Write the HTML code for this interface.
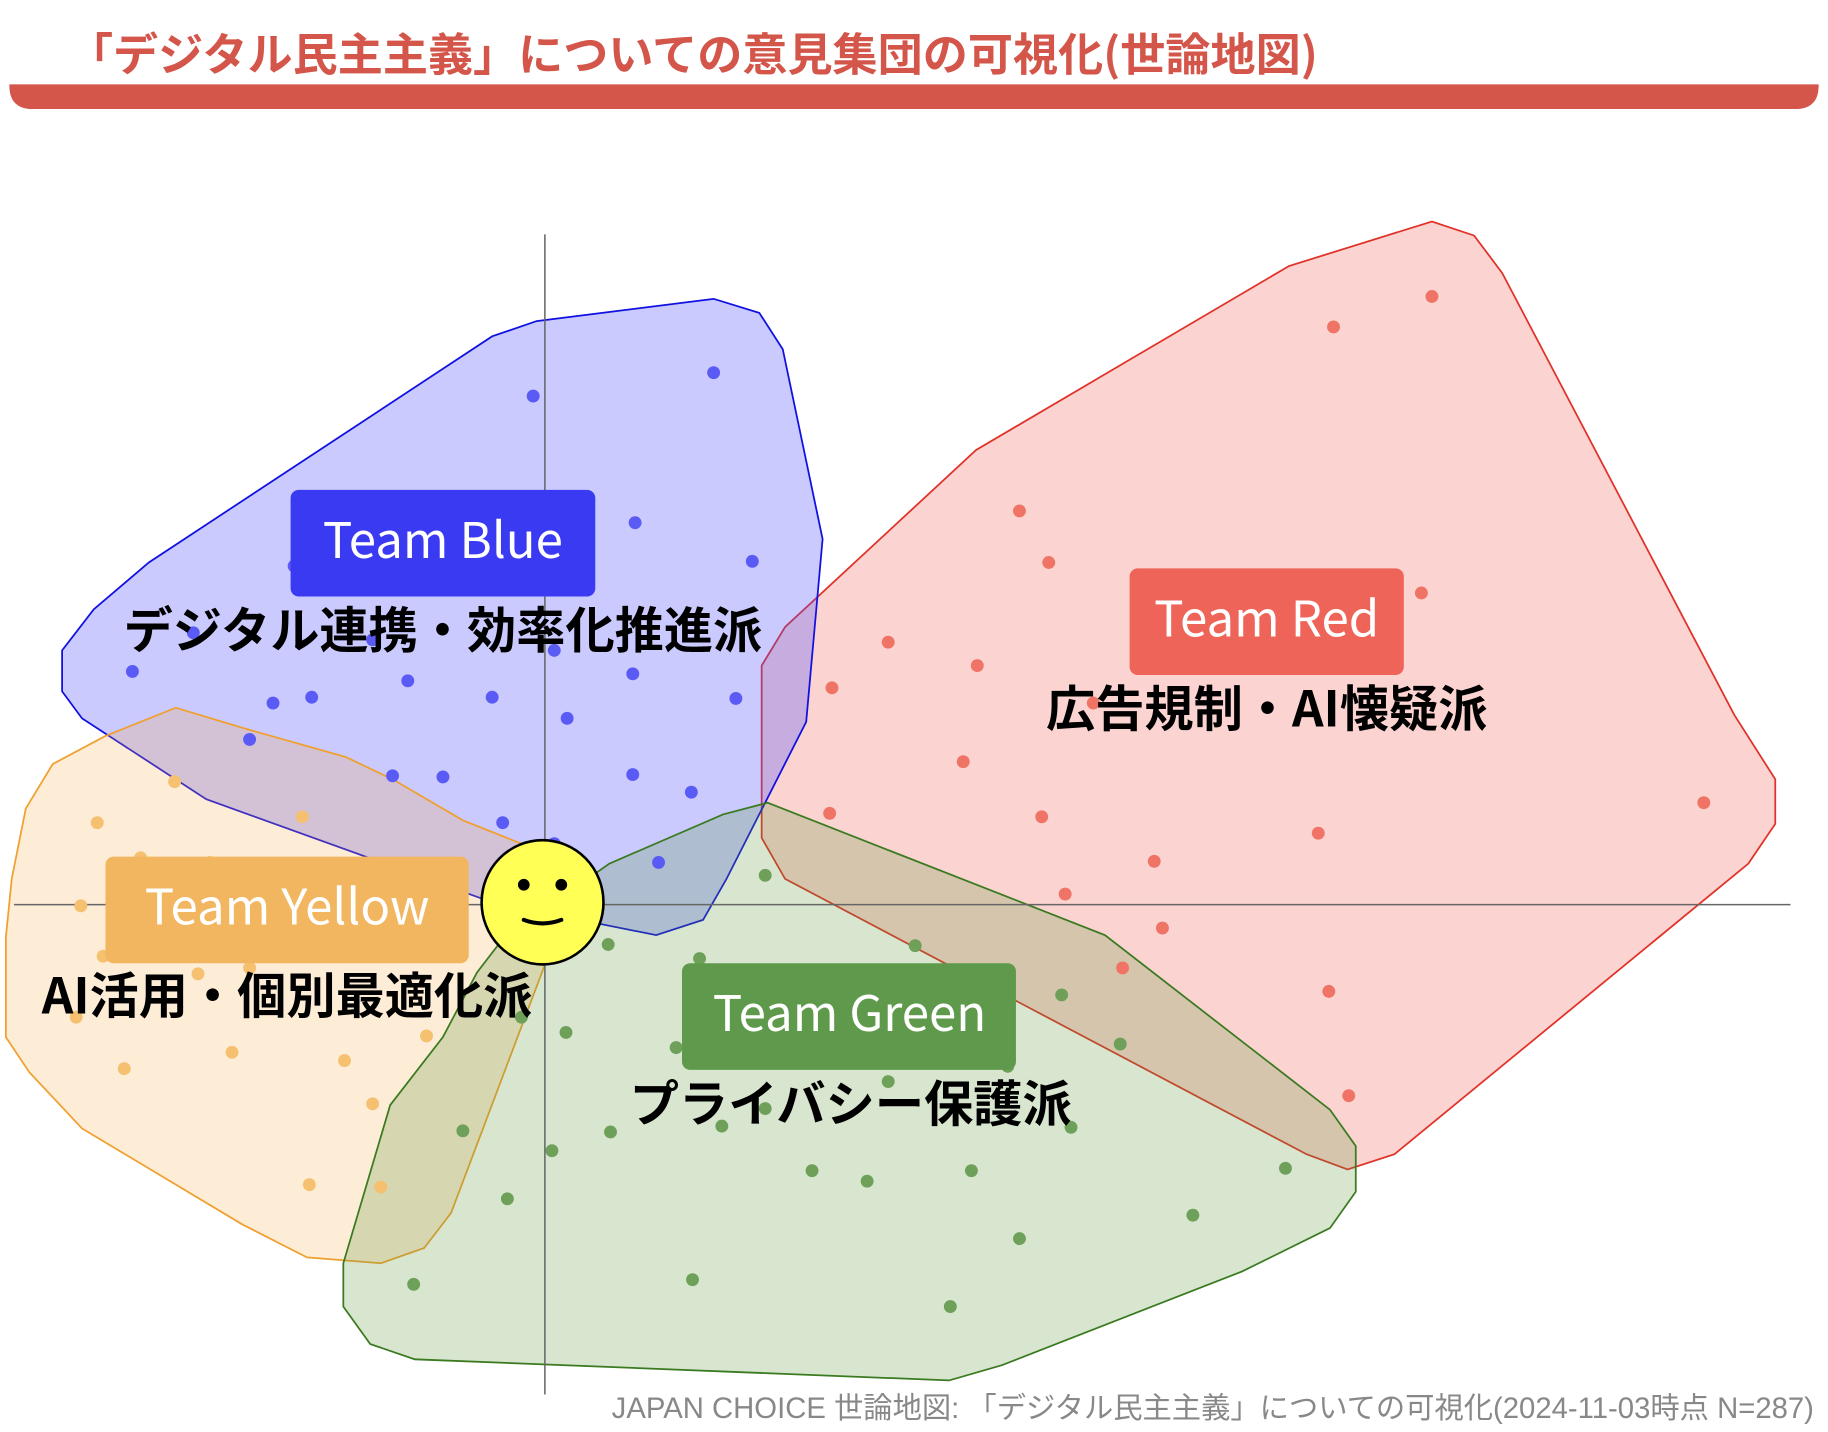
<!DOCTYPE html>
<html><head><meta charset="utf-8"><style>
html,body{margin:0;padding:0;background:#fff;}
svg{display:block;}
text{font-family:"Liberation Sans","Noto Sans CJK JP",sans-serif;}
</style></head><body>
<svg width="1828" height="1432" viewBox="0 0 1560 1222" xmlns="http://www.w3.org/2000/svg">
<rect width="1560" height="1222" fill="#fff"/>
<text x="58" y="60" font-size="38.5" font-weight="bold" fill="#d4554a" style="font-family:'Noto Sans CJK JP',sans-serif">「デジタル民主主義」についての意見集団の可視化(世論地図)</text>
<path d="M8 72 H1552 V73 Q1552 93 1532 93 H28 Q8 93 8 73 Z" fill="#d4554a"/>

<polygon points="650,568 670,535 833,384 1100,227 1222,189 1258,201 1282,233 1480,610 1515,665 1515,703 1492,737 1190,985 1150,998 1115,985 670,750 650,715" fill="rgba(240,100,90,0.28)" stroke="#e03228" stroke-width="1.5"/>
<polygon points="53,555 53,590 70,613 176,682 420,770 560,798 600,785 620,750 688,616 702,460 668,298 648,267 609,255 458,274 420,287 127,480 80,520" fill="rgba(80,80,255,0.3)" stroke="#1010e0" stroke-width="1.5"/>
<polygon points="10,750 22,690 45,652 90,628 150,604 210,622 295,646 335,665 395,700 445,720 475,770 470,810 385,1035 362,1065 325,1078 262,1073 207,1045 70,963 25,915 5,885 5,800" fill="rgba(245,170,70,0.22)" stroke="#f0a030" stroke-width="1.5"/>
<polygon points="293,1078 293,1115 316,1147 354,1160 810,1178 855,1165 1060,1085 1135,1048 1157,1017 1157,978 1135,947 943,798 655,685 617,695 520,737 430,800 407,830 378,885 333,943" fill="rgba(90,150,60,0.24)" stroke="#3a7a20" stroke-width="1.5"/>

<line x1="465" y1="200" x2="465" y2="1190" stroke="#666" stroke-width="1.3"/>
<line x1="12" y1="772" x2="1528" y2="772" stroke="#666" stroke-width="1.3"/>

<g fill="#5a5af5">
<circle cx="455" cy="338" r="5.5"/><circle cx="609" cy="318" r="5.5"/><circle cx="363" cy="432" r="5.5"/><circle cx="542" cy="446" r="5.5"/><circle cx="642" cy="479" r="5.5"/><circle cx="251" cy="483" r="5.5"/><circle cx="473" cy="555" r="5.5"/><circle cx="540" cy="575" r="5.5"/><circle cx="113" cy="573" r="5.5"/><circle cx="348" cy="581" r="5.5"/><circle cx="266" cy="595" r="5.5"/><circle cx="233" cy="600" r="5.5"/><circle cx="420" cy="595" r="5.5"/><circle cx="628" cy="596" r="5.5"/><circle cx="484" cy="613" r="5.5"/><circle cx="213" cy="631" r="5.5"/><circle cx="318" cy="546" r="5.5"/><circle cx="335" cy="662" r="5.5"/><circle cx="378" cy="663" r="5.5"/><circle cx="540" cy="661" r="5.5"/><circle cx="590" cy="676" r="5.5"/><circle cx="429" cy="702" r="5.5"/><circle cx="562" cy="736" r="5.5"/><circle cx="165" cy="540" r="5.5"/><circle cx="473" cy="720" r="5.5"/>
</g>
<g fill="#ef7466">
<circle cx="1222" cy="253" r="5.5"/><circle cx="1138" cy="279" r="5.5"/><circle cx="870" cy="436" r="5.5"/><circle cx="895" cy="480" r="5.5"/><circle cx="1213" cy="506" r="5.5"/><circle cx="758" cy="548" r="5.5"/><circle cx="834" cy="568" r="5.5"/><circle cx="710" cy="587" r="5.5"/><circle cx="933" cy="600" r="5.5"/><circle cx="822" cy="650" r="5.5"/><circle cx="708" cy="694" r="5.5"/><circle cx="889" cy="697" r="5.5"/><circle cx="1125" cy="711" r="5.5"/><circle cx="985" cy="735" r="5.5"/><circle cx="909" cy="763" r="5.5"/><circle cx="992" cy="792" r="5.5"/><circle cx="1454" cy="685" r="5.5"/><circle cx="958" cy="826" r="5.5"/><circle cx="1134" cy="846" r="5.5"/><circle cx="1151" cy="935" r="5.5"/>
</g>
<g fill="#6ea05a">
<circle cx="653" cy="747" r="5.5"/><circle cx="519" cy="806" r="5.5"/><circle cx="597" cy="818" r="5.5"/><circle cx="781" cy="807" r="5.5"/><circle cx="707" cy="843" r="5.5"/><circle cx="906" cy="849" r="5.5"/><circle cx="483" cy="881" r="5.5"/><circle cx="577" cy="894" r="5.5"/><circle cx="646" cy="885" r="5.5"/><circle cx="695" cy="890" r="5.5"/><circle cx="797" cy="892" r="5.5"/><circle cx="956" cy="891" r="5.5"/><circle cx="758" cy="923" r="5.5"/><circle cx="860" cy="910" r="5.5"/><circle cx="616" cy="961" r="5.5"/><circle cx="653" cy="946" r="5.5"/><circle cx="914" cy="962" r="5.5"/><circle cx="521" cy="966" r="5.5"/><circle cx="395" cy="965" r="5.5"/><circle cx="471" cy="982" r="5.5"/><circle cx="693" cy="999" r="5.5"/><circle cx="740" cy="1008" r="5.5"/><circle cx="829" cy="999" r="5.5"/><circle cx="1097" cy="997" r="5.5"/><circle cx="433" cy="1023" r="5.5"/><circle cx="1018" cy="1037" r="5.5"/><circle cx="870" cy="1057" r="5.5"/><circle cx="353" cy="1096" r="5.5"/><circle cx="591" cy="1092" r="5.5"/><circle cx="811" cy="1115" r="5.5"/><circle cx="445" cy="868" r="5.5"/>
</g>
<g fill="#f5c070">
<circle cx="83" cy="702" r="5.5"/><circle cx="149" cy="667" r="5.5"/><circle cx="258" cy="697" r="5.5"/><circle cx="120" cy="732" r="5.5"/><circle cx="179" cy="736" r="5.5"/><circle cx="269" cy="752" r="5.5"/><circle cx="69" cy="773" r="5.5"/><circle cx="210" cy="796" r="5.5"/><circle cx="88" cy="816" r="5.5"/><circle cx="169" cy="831" r="5.5"/><circle cx="213" cy="826" r="5.5"/><circle cx="65" cy="868" r="5.5"/><circle cx="364" cy="884" r="5.5"/><circle cx="198" cy="898" r="5.5"/><circle cx="294" cy="905" r="5.5"/><circle cx="106" cy="912" r="5.5"/><circle cx="318" cy="942" r="5.5"/><circle cx="264" cy="1011" r="5.5"/><circle cx="325" cy="1013" r="5.5"/>
</g>

<rect x="248" y="418" width="260" height="91" rx="7" fill="#3a3af2"/>
<text x="378" y="476" font-size="42" fill="#fff" text-anchor="middle" style="font-family:'Noto Sans CJK JP',sans-serif">Team Blue</text>
<text x="378" y="553" font-size="42" font-weight="bold" fill="#000" text-anchor="middle" style="font-family:'Noto Sans CJK JP',sans-serif">デジタル連携・効率化推進派</text>

<rect x="964" y="485" width="234" height="91" rx="7" fill="#ef6458"/>
<text x="1081" y="543" font-size="42" fill="#fff" text-anchor="middle" style="font-family:'Noto Sans CJK JP',sans-serif">Team Red</text>
<text x="1081" y="620" font-size="42" font-weight="bold" fill="#000" text-anchor="middle" style="font-family:'Noto Sans CJK JP',sans-serif">広告規制・AI懐疑派</text>

<rect x="90" y="731" width="310" height="91" rx="7" fill="#f2b660"/>
<text x="245" y="789" font-size="42" fill="#fff" text-anchor="middle" style="font-family:'Noto Sans CJK JP',sans-serif">Team Yellow</text>
<text x="245" y="865" font-size="42" font-weight="bold" fill="#000" text-anchor="middle" style="font-family:'Noto Sans CJK JP',sans-serif">AI活用・個別最適化派</text>

<rect x="582" y="822" width="285" height="91" rx="7" fill="#5f9a4c"/>
<text x="725" y="880" font-size="42" fill="#fff" text-anchor="middle" style="font-family:'Noto Sans CJK JP',sans-serif">Team Green</text>
<text x="726" y="957" font-size="42" font-weight="bold" fill="#000" text-anchor="middle" style="font-family:'Noto Sans CJK JP',sans-serif">プライバシー保護派</text>

<ellipse cx="463" cy="770" rx="52" ry="53" fill="#ffff55" stroke="#000" stroke-width="2.2"/>
<circle cx="447" cy="755" r="5" fill="#000"/>
<circle cx="479" cy="755" r="5" fill="#000"/>
<path d="M447 785 Q463 791 479 785" fill="none" stroke="#000" stroke-width="3.5" stroke-linecap="round"/>

<text x="1548" y="1210" font-size="25" fill="#888" text-anchor="end">JAPAN CHOICE 世論地図: 「デジタル民主主義」についての可視化(2024-11-03時点 N=287)</text>
</svg>
</body></html>
